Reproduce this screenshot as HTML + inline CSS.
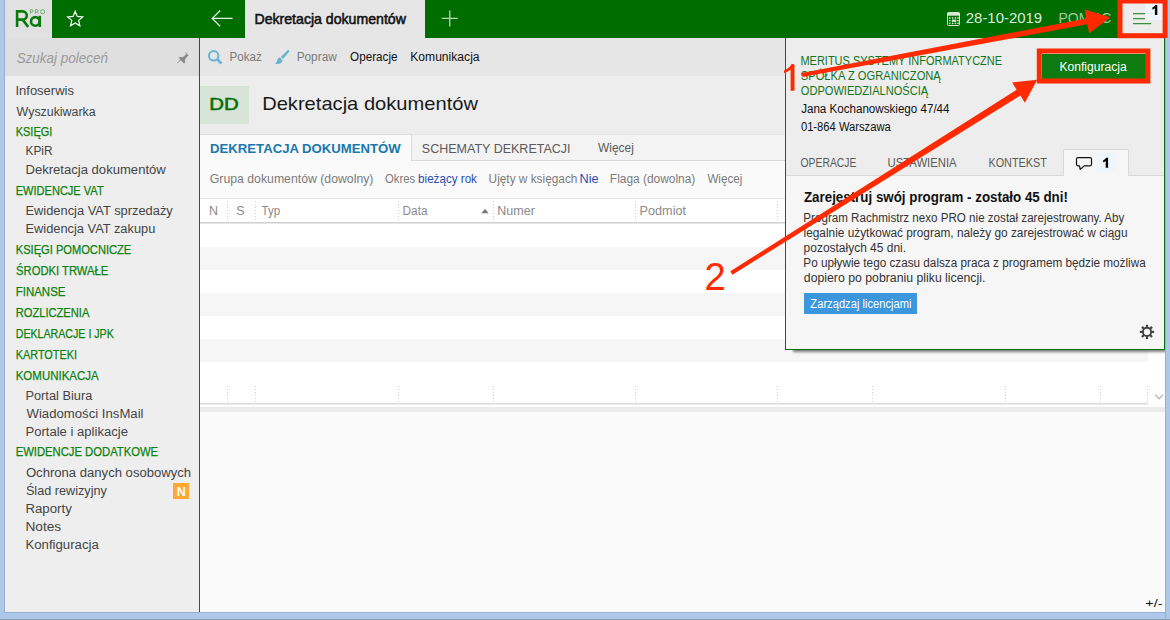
<!DOCTYPE html>
<html>
<head>
<meta charset="utf-8">
<title>Dekretacja dokumentów</title>
<style>
html,body{margin:0;padding:0;}
body{width:1170px;height:620px;overflow:hidden;position:relative;background:#adc8e8;font-family:"Liberation Sans",sans-serif;font-size:12.5px;color:#444;}
.a{position:absolute;}
.t{position:absolute;white-space:nowrap;line-height:1;transform-origin:0 0;}
svg{position:absolute;left:0;top:0;overflow:visible;}
</style>
</head>
<body>
<!-- window frame -->
<div class="a" style="left:0;top:619px;width:1170px;height:1px;background:#8b9db3;"></div>
<!-- top bar -->
<div class="a" style="left:5px;top:0;width:1160px;height:38px;background:#006d00;"></div>
<div class="a" style="left:5px;top:0;width:47px;height:38px;background:#e1e1e1;"></div>
<div class="a" style="left:245px;top:0;width:180px;height:38px;background:#e6e6e6;"></div>
<!-- sidebar -->
<div class="a" style="left:5px;top:38px;width:194px;height:574px;background:#eeeeee;"></div>
<div class="a" style="left:5px;top:38px;width:194px;height:38px;background:#dfdfdf;"></div>
<!-- main -->
<div class="a" style="left:200px;top:38px;width:965px;height:574px;background:#fafafa;"></div>
<div class="a" style="left:200px;top:38px;width:965px;height:38px;background:#e6e6e6;"></div>
<div class="a" style="left:200px;top:76px;width:965px;height:58px;background:#ededed;"></div>
<div class="a" style="left:200px;top:86px;width:49px;height:38px;background:#d8e4d8;"></div>
<!-- tab strip -->
<div class="a" style="left:200px;top:134px;width:965px;height:26px;background:#f3f3f3;border-top:1px solid #e4e4e4;box-sizing:border-box;"></div>
<div class="a" style="left:200px;top:160px;width:965px;height:1px;background:#dadada;"></div>
<div class="a" style="left:200px;top:134px;width:212px;height:27px;background:#fafafa;border-top:1px solid #dcdcdc;border-right:1px solid #dcdcdc;box-sizing:border-box;"></div>
<!-- filter row -->
<div class="a" style="left:200px;top:161px;width:965px;height:37px;background:#fafafa;"></div>
<!-- table -->
<div class="a" style="left:200px;top:198px;width:965px;height:209px;background:#ffffff;"></div>
<div class="a" style="left:200px;top:198px;width:965px;height:1px;background:#e6e6e6;"></div>
<div class="a" style="left:200px;top:222px;width:965px;height:1px;background:#cfcfcf;"></div>
<div class="a" style="left:200px;top:223px;width:965px;height:1px;background:#e6e6e6;"></div>
<div class="a" style="left:200px;top:247px;width:948px;height:23px;background:#f6f6f6;"></div>
<div class="a" style="left:200px;top:293px;width:948px;height:23px;background:#f6f6f6;"></div>
<div class="a" style="left:200px;top:339px;width:948px;height:23px;background:#f6f6f6;"></div>
<div class="a" style="left:200px;top:403px;width:948px;height:1px;background:#dcdcdc;"></div>
<div class="a" style="left:200px;top:404px;width:948px;height:1px;background:#ececec;"></div>
<div class="a" style="left:200px;top:407px;width:965px;height:5px;background:#ebebeb;"></div>
<!-- green vertical line -->
<div class="a" style="left:199px;top:38px;width:1px;height:574px;background:#0a7010;"></div>
<div class="t" style="left:15px;top:84.75px;font-size:12.5px;color:#444444;transform:translateX(0.43px) scaleX(1.0401);">Infoserwis</div>
<div class="t" style="left:16px;top:105.75px;font-size:12.5px;color:#444444;transform:translateX(0.60px) scaleX(0.9911);">Wyszukiwarka</div>
<div class="t" style="left:15px;top:125.75px;font-size:12.5px;color:#0c820c;-webkit-text-stroke:0.25px #0c820c;transform:translateX(0.72px) scaleX(0.8766);">KSIĘGI</div>
<div class="t" style="left:25px;top:144.75px;font-size:12.5px;color:#444444;transform:translateX(0.55px) scaleX(0.9461);">KPiR</div>
<div class="t" style="left:25px;top:163.75px;font-size:12.5px;color:#444444;transform:translateX(0.45px) scaleX(1.0463);">Dekretacja dokumentów</div>
<div class="t" style="left:15px;top:184.75px;font-size:12.5px;color:#0c820c;-webkit-text-stroke:0.25px #0c820c;transform:translateX(0.72px) scaleX(0.8832);">EWIDENCJE VAT</div>
<div class="t" style="left:25px;top:204.75px;font-size:12.5px;color:#444444;transform:translateX(0.47px) scaleX(1.0292);">Ewidencja VAT sprzedaży</div>
<div class="t" style="left:25px;top:222.75px;font-size:12.5px;color:#444444;transform:translateX(0.47px) scaleX(1.0268);">Ewidencja VAT zakupu</div>
<div class="t" style="left:15px;top:243.75px;font-size:12.5px;color:#0c820c;-webkit-text-stroke:0.25px #0c820c;transform:translateX(0.71px) scaleX(0.8897);">KSIĘGI POMOCNICZE</div>
<div class="t" style="left:16px;top:264.75px;font-size:12.5px;color:#0c820c;-webkit-text-stroke:0.25px #0c820c;transform:translateX(0.09px) scaleX(0.8987);">ŚRODKI TRWAŁE</div>
<div class="t" style="left:15px;top:285.75px;font-size:12.5px;color:#0c820c;-webkit-text-stroke:0.25px #0c820c;transform:translateX(0.68px) scaleX(0.9193);">FINANSE</div>
<div class="t" style="left:15px;top:306.75px;font-size:12.5px;color:#0c820c;-webkit-text-stroke:0.25px #0c820c;transform:translateX(0.71px) scaleX(0.8912);">ROZLICZENIA</div>
<div class="t" style="left:15px;top:327.75px;font-size:12.5px;color:#0c820c;-webkit-text-stroke:0.25px #0c820c;transform:translateX(0.75px) scaleX(0.8501);">DEKLARACJE I JPK</div>
<div class="t" style="left:15px;top:348.75px;font-size:12.5px;color:#0c820c;-webkit-text-stroke:0.25px #0c820c;transform:translateX(0.73px) scaleX(0.8698);">KARTOTEKI</div>
<div class="t" style="left:15px;top:369.75px;font-size:12.5px;color:#0c820c;-webkit-text-stroke:0.25px #0c820c;transform:translateX(0.68px) scaleX(0.9202);">KOMUNIKACJA</div>
<div class="t" style="left:25px;top:389.75px;font-size:12.5px;color:#444444;transform:translateX(0.48px) scaleX(1.0224);">Portal Biura</div>
<div class="t" style="left:26px;top:407.75px;font-size:12.5px;color:#444444;transform:translateX(0.50px) scaleX(1.0529);">Wiadomości InsMail</div>
<div class="t" style="left:25px;top:425.75px;font-size:12.5px;color:#444444;transform:translateX(0.45px) scaleX(1.0461);">Portale i aplikacje</div>
<div class="t" style="left:15px;top:445.75px;font-size:12.5px;color:#0c820c;-webkit-text-stroke:0.25px #0c820c;transform:translateX(0.70px) scaleX(0.9005);">EWIDENCJE DODATKOWE</div>
<div class="t" style="left:25px;top:466.75px;font-size:12.5px;color:#444444;transform:translateX(0.91px) scaleX(1.0473);">Ochrona danych osobowych</div>
<div class="t" style="left:25px;top:484.75px;font-size:12.5px;color:#444444;transform:translateX(0.93px) scaleX(1.0123);">Ślad rewizyjny</div>
<div class="t" style="left:25px;top:502.75px;font-size:12.5px;color:#444444;transform:translateX(0.44px) scaleX(1.0592);">Raporty</div>
<div class="t" style="left:25px;top:520.75px;font-size:12.5px;color:#444444;transform:translateX(0.40px) scaleX(1.0956);">Notes</div>
<div class="t" style="left:25px;top:538.75px;font-size:12.5px;color:#444444;transform:translateX(0.45px) scaleX(1.0549);">Konfiguracja</div>
<div class="t" style="left:16px;top:51.00px;font-size:14px;color:#9a9a9a;font-style:italic;transform:translateX(0.64px) scaleX(0.9619);">Szukaj poleceń</div>
<div class="t" style="left:254px;top:11.75px;font-size:14.5px;color:#111111;-webkit-text-stroke:0.55px #111111;transform:translateX(0.44px) scaleX(0.9738);">Dekretacja dokumentów</div>
<div class="t" style="left:965px;top:10.90px;font-size:14.2px;color:#dcecdc;transform:translateX(0.78px) scaleX(1.0519);">28-10-2019</div>
<div class="t" style="left:1058px;top:10.90px;font-size:14.2px;color:#a3c9a3;transform:translateX(0.39px) scaleX(0.9882);">POMOC</div>
<div class="t" style="left:229px;top:50.75px;font-size:12.5px;color:#7a7a7a;transform:translateX(0.47px) scaleX(0.9283);">Pokaż</div>
<div class="t" style="left:296px;top:50.75px;font-size:12.5px;color:#7a7a7a;transform:translateX(0.65px) scaleX(0.9464);">Popraw</div>
<div class="t" style="left:350px;top:50.75px;font-size:12.5px;color:#111111;transform:translateX(0.07px) scaleX(0.9347);">Operacje</div>
<div class="t" style="left:410px;top:50.75px;font-size:12.5px;color:#111111;transform:translateX(0.23px) scaleX(0.9687);">Komunikacja</div>
<div class="t" style="left:209px;top:96.00px;font-size:17px;color:#0a6e0a;-webkit-text-stroke:0.55px #0a6e0a;transform:translateX(0.31px) scaleX(1.1972);">DD</div>
<div class="t" style="left:262px;top:95.20px;font-size:18.6px;color:#1a1a1a;transform:translateX(0.13px) scaleX(1.0822);">Dekretacja dokumentów</div>
<div class="t" style="left:210px;top:141.80px;font-size:13.4px;color:#1878ad;font-weight:700;transform:translateX(0.04px) scaleX(0.9822);">DEKRETACJA DOKUMENTÓW</div>
<div class="t" style="left:421px;top:141.80px;font-size:13.4px;color:#5a5a5a;transform:translateX(0.87px) scaleX(0.9336);">SCHEMATY DEKRETACJI</div>
<div class="t" style="left:598px;top:141.75px;font-size:12.5px;color:#5a5a5a;transform:translateX(0.00px) scaleX(0.9545);">Więcej</div>
<div class="t" style="left:209px;top:172.75px;font-size:12.5px;color:#7a7a7a;transform:translateX(0.79px) scaleX(0.9813);">Grupa dokumentów (dowolny)</div>
<div class="t" style="left:384px;top:172.75px;font-size:12.5px;color:#7a7a7a;transform:translateX(0.99px) scaleX(0.9030);">Okres</div>
<div class="t" style="left:418px;top:172.75px;font-size:12.5px;color:#2b4db3;transform:translateX(0.10px) scaleX(0.9307);">bieżący rok</div>
<div class="t" style="left:488px;top:172.75px;font-size:12.5px;color:#7a7a7a;transform:translateX(0.61px) scaleX(0.9470);">Ujęty w księgach</div>
<div class="t" style="left:579px;top:172.75px;font-size:12.5px;color:#2b4db3;transform:translateX(0.49px) scaleX(1.0150);">Nie</div>
<div class="t" style="left:609px;top:172.75px;font-size:12.5px;color:#7a7a7a;transform:translateX(0.85px) scaleX(0.9533);">Flaga (dowolna)</div>
<div class="t" style="left:707px;top:172.75px;font-size:12.5px;color:#7a7a7a;transform:translateX(0.40px) scaleX(0.9300);">Więcej</div>
<div class="t" style="left:209px;top:204.75px;font-size:12.5px;color:#8a8a8a;transform:translateX(0.07px) scaleX(1.0000);">N</div>
<div class="t" style="left:236px;top:204.75px;font-size:12.5px;color:#8a8a8a;transform:translateX(0.21px) scaleX(1.0000);">S</div>
<div class="t" style="left:261px;top:204.75px;font-size:12.5px;color:#8a8a8a;transform:translateX(0.47px) scaleX(0.9235);">Typ</div>
<div class="t" style="left:402px;top:204.75px;font-size:12.5px;color:#8a8a8a;transform:translateX(0.55px) scaleX(0.9469);">Data</div>
<div class="t" style="left:497px;top:204.75px;font-size:12.5px;color:#8a8a8a;transform:translateX(0.30px) scaleX(1.0016);">Numer</div>
<div class="t" style="left:639px;top:204.75px;font-size:12.5px;color:#8a8a8a;transform:translateX(0.59px) scaleX(1.0129);">Podmiot</div>
<div class="t" style="left:1145px;top:598.25px;font-size:11.5px;color:#111111;transform:translateX(0.37px) scaleX(1.2592);">+/-</div>
<!-- N badge -->
<div class="a" style="left:173px;top:483px;width:16px;height:16px;background:#ffa834;"></div>
<svg width="1170" height="620" viewBox="0 0 1170 620">
<g fill="none" stroke="#0a7a0a" stroke-width="2.6"><path d="M17.1 26.9V11.4h5.6a4.1 4.1 0 0 1 0 8.2H17.1M22.6 19.6l5.6 7.3"/><circle cx="35.3" cy="21.4" r="4.3"/><path d="M39.8 15.8v11.1"/></g>
<g fill="none" stroke="#6fb06f" stroke-width="0.95"><path d="M30.4 13.8V9.65h1.5a1.25 1.25 0 0 1 0 2.5h-1.5"/><path d="M35.4 13.8V9.65h1.5a1.2 1.2 0 0 1 0 2.4h-1.5M36.9 12.05l1.5 1.75"/><ellipse cx="42.6" cy="11.7" rx="2.15" ry="2.1"/></g>
<polygon points="75.20,11.40 77.32,16.39 82.71,16.86 78.62,20.41 79.84,25.69 75.20,22.90 70.56,25.69 71.78,20.41 67.69,16.86 73.08,16.39" fill="none" stroke="#ffffff" stroke-width="1.2" stroke-linejoin="miter"/>
<path d="M212.3 18.4H232.6M220.2 10.5l-7.9 7.9 7.9 7.9" fill="none" stroke="#e2eee2" stroke-width="1.3"/>
<path d="M441.8 18.4h16M449.8 10.4v16" fill="none" stroke="#b5d5b5" stroke-width="1.3"/>
<g fill="#8a8a8a" stroke="none"><path d="M185.2 51.9l3.6 3.8-1.3 0.6-2.6 3.3 0.3 3-1.2 0.9-5.2-5.4 1-1.2 3 0.3 3.2-2.7z"/><path d="M181.6 59.4l-3.9 3.9-0.5-0.5 3.9-3.9z"/></g>
<g fill="none" stroke="#6ab4d3"><circle cx="213.7" cy="55.8" r="4.8" stroke-width="2"/><path d="M217.3 59.4l4.1 4.1" stroke-width="2.6" stroke-linecap="butt"/></g>
<g fill="#6ab4d3"><path d="M288.9 50.2c0.6 0.6 0.3 1.4-0.3 2.2l-5.6 6.6-2.2-2.1 6.3-6.2c0.7-0.7 1.3-1 1.8-0.5z"/><path d="M279.9 57.6l2.3 2.2c0.6 1.6-0.4 3-2.2 3.6-1.6 0.6-3.6 0.7-4.9 0.4 1.2-0.8 1.7-1.8 2-3.2 0.3-1.6 1.2-2.8 2.8-3z"/></g>
<g fill="#d7e7d7"><rect x="947.5" y="12.5" width="12" height="13" rx="1" fill="none" stroke="#d7e7d7" stroke-width="1"/><rect x="947.5" y="12.5" width="12" height="3.2"/><rect x="949.0" y="17.2" width="1.5" height="1.5"/><rect x="949.0" y="19.9" width="1.5" height="1.5"/><rect x="949.0" y="22.6" width="1.5" height="1.5"/><rect x="951.9" y="17.2" width="1.5" height="1.5"/><rect x="951.9" y="19.9" width="1.5" height="1.5"/><rect x="951.9" y="22.6" width="1.5" height="1.5"/><rect x="954.7" y="17.2" width="1.5" height="1.5"/><rect x="954.7" y="19.9" width="1.5" height="1.5"/><rect x="954.7" y="22.6" width="1.5" height="1.5"/><rect x="957.3" y="17.2" width="1.5" height="1.5"/><rect x="957.3" y="19.9" width="1.5" height="1.5"/><rect x="957.3" y="22.6" width="1.5" height="1.5"/><rect x="951.9" y="19.6" width="4.3" height="2.2"/></g>
<path d="M481.3 213.2l3.7-4.4 3.7 4.4z" fill="#7a7a7a"/>
<line x1="227.5" y1="201" x2="227.5" y2="222" stroke="#cfcfcf" stroke-width="1" stroke-dasharray="1 2"/>
<line x1="255.5" y1="201" x2="255.5" y2="222" stroke="#cfcfcf" stroke-width="1" stroke-dasharray="1 2"/>
<line x1="398.5" y1="201" x2="398.5" y2="222" stroke="#cfcfcf" stroke-width="1" stroke-dasharray="1 2"/>
<line x1="493.5" y1="201" x2="493.5" y2="222" stroke="#cfcfcf" stroke-width="1" stroke-dasharray="1 2"/>
<line x1="635.5" y1="201" x2="635.5" y2="222" stroke="#cfcfcf" stroke-width="1" stroke-dasharray="1 2"/>
<line x1="777.5" y1="201" x2="777.5" y2="222" stroke="#cfcfcf" stroke-width="1" stroke-dasharray="1 2"/>
<line x1="227.5" y1="386" x2="227.5" y2="404" stroke="#cfcfcf" stroke-width="1" stroke-dasharray="1 2"/>
<line x1="255.5" y1="386" x2="255.5" y2="404" stroke="#cfcfcf" stroke-width="1" stroke-dasharray="1 2"/>
<line x1="398.5" y1="386" x2="398.5" y2="404" stroke="#cfcfcf" stroke-width="1" stroke-dasharray="1 2"/>
<line x1="493.5" y1="386" x2="493.5" y2="404" stroke="#cfcfcf" stroke-width="1" stroke-dasharray="1 2"/>
<line x1="635.5" y1="386" x2="635.5" y2="404" stroke="#cfcfcf" stroke-width="1" stroke-dasharray="1 2"/>
<line x1="777.5" y1="386" x2="777.5" y2="404" stroke="#cfcfcf" stroke-width="1" stroke-dasharray="1 2"/>
<line x1="872.5" y1="386" x2="872.5" y2="404" stroke="#cfcfcf" stroke-width="1" stroke-dasharray="1 2"/>
<line x1="1005.5" y1="386" x2="1005.5" y2="404" stroke="#cfcfcf" stroke-width="1" stroke-dasharray="1 2"/>
<line x1="1100.5" y1="386" x2="1100.5" y2="404" stroke="#cfcfcf" stroke-width="1" stroke-dasharray="1 2"/>
<line x1="1147.5" y1="386" x2="1147.5" y2="404" stroke="#cfcfcf" stroke-width="1" stroke-dasharray="1 2"/>
<path d="M1155.2 394.8l3.9 3.9 3.9-3.9" fill="none" stroke="#bdbdbd" stroke-width="1.6"/>
</svg>
<!-- popup panel -->
<div class="a" style="left:785px;top:38px;width:380px;height:312px;background:#ededed;box-shadow:8px 2px 2.5px rgba(0,0,0,0.5);"></div>
<div class="a" style="left:786px;top:176px;width:378px;height:173px;background:#f6f6f6;"></div>
<div class="a" style="left:786px;top:175px;width:378px;height:1px;background:#d9d9d9;"></div>
<div class="a" style="left:1063px;top:149px;width:66px;height:27px;background:#f6f6f6;border:1px solid #d9d9d9;border-bottom:none;box-sizing:border-box;"></div>
<div class="a" style="left:1096px;top:153px;width:20px;height:20px;background:#eef6fb;"></div>
<div class="a" style="left:785px;top:38px;width:380px;height:312px;border:1px solid #0a7010;border-top:none;box-sizing:border-box;"></div>
<div class="a" style="left:1042px;top:54px;width:104px;height:25px;background:#0f7a0f;"></div>
<div class="a" style="left:804px;top:293px;width:113px;height:21px;background:#3a96dd;"></div>
<!-- menu button -->
<div class="a" style="left:1120px;top:0;width:45px;height:36px;background:#ececec;"></div>
<div class="a" style="left:1145px;top:3px;width:18px;height:17px;background:#eef6fb;"></div>
<div class="t" style="left:800px;top:54.75px;font-size:12.5px;color:#14741a;transform:translateX(0.42px) scaleX(0.8789);">MERITUS SYSTEMY INFORMATYCZNE</div>
<div class="t" style="left:800px;top:69.75px;font-size:12.5px;color:#14741a;transform:translateX(0.80px) scaleX(0.8918);">SPÓŁKA Z OGRANICZONĄ</div>
<div class="t" style="left:800px;top:84.75px;font-size:12.5px;color:#14741a;transform:translateX(0.80px) scaleX(0.8855);">ODPOWIEDZIALNOŚCIĄ</div>
<div class="t" style="left:801px;top:102.75px;font-size:12.5px;color:#111111;transform:translateX(0.13px) scaleX(0.9283);">Jana Kochanowskiego 47/44</div>
<div class="t" style="left:800px;top:120.75px;font-size:12.5px;color:#111111;transform:translateX(0.91px) scaleX(0.8960);">01-864 Warszawa</div>
<div class="t" style="left:1059px;top:60.75px;font-size:12.5px;color:#ffffff;transform:translateX(0.43px) scaleX(0.9688);">Konfiguracja</div>
<div class="t" style="left:800px;top:156.75px;font-size:12.5px;color:#5a5a5a;transform:translateX(0.53px) scaleX(0.8297);">OPERACJE</div>
<div class="t" style="left:887px;top:156.75px;font-size:12.5px;color:#5a5a5a;transform:translateX(0.45px) scaleX(0.9061);">USTAWIENIA</div>
<div class="t" style="left:988px;top:156.75px;font-size:12.5px;color:#5a5a5a;transform:translateX(0.43px) scaleX(0.8682);">KONTEKST</div>
<div class="t" style="left:803px;top:190.00px;font-size:14px;color:#111111;font-weight:700;transform:translateX(0.94px) scaleX(0.9532);">Zarejestruj swój program - zostało 45 dni!</div>
<div class="t" style="left:803px;top:211.75px;font-size:12.5px;color:#333333;transform:translateX(0.37px) scaleX(0.9284);">Program Rachmistrz nexo PRO nie został zarejestrowany. Aby</div>
<div class="t" style="left:803px;top:226.75px;font-size:12.5px;color:#333333;transform:translateX(0.53px) scaleX(0.9477);">legalnie użytkować program, należy go zarejestrować w ciągu</div>
<div class="t" style="left:803px;top:241.75px;font-size:12.5px;color:#333333;transform:translateX(0.58px) scaleX(0.9575);">pozostałych 45 dni.</div>
<div class="t" style="left:803px;top:256.75px;font-size:12.5px;color:#333333;transform:translateX(0.36px) scaleX(0.9384);">Po upływie tego czasu dalsza praca z programem będzie możliwa</div>
<div class="t" style="left:803px;top:271.75px;font-size:12.5px;color:#333333;transform:translateX(0.81px) scaleX(0.9823);">dopiero po pobraniu pliku licencji.</div>
<div class="t" style="left:810px;top:297.75px;font-size:12.5px;color:#ffffff;transform:translateX(0.37px) scaleX(0.8927);">Zarządzaj licencjami</div>
<svg width="1170" height="620" viewBox="0 0 1170 620">
<path d="M1133 13.6h12M1133 18.6h12M1133 23.6h18.2" stroke="#3d8f3d" stroke-width="1.3" fill="none"/>
<path d="M1078 157.6h12a1.5 1.5 0 0 1 1.5 1.5v5.2a1.5 1.5 0 0 1 -1.5 1.5h-5.6l-4.2 3.6-0.7-3.6h-1.5a1.5 1.5 0 0 1 -1.5 -1.5v-5.2a1.5 1.5 0 0 1 1.5 -1.5z" fill="none" stroke="#111" stroke-width="1.2" stroke-linejoin="round"/>
<line x1="1151.20" y1="331.90" x2="1154.10" y2="331.90" stroke="#444" stroke-width="2.2"/><line x1="1149.97" y1="334.87" x2="1152.02" y2="336.92" stroke="#444" stroke-width="2.2"/><line x1="1147.00" y1="336.10" x2="1147.00" y2="339.00" stroke="#444" stroke-width="2.2"/><line x1="1144.03" y1="334.87" x2="1141.98" y2="336.92" stroke="#444" stroke-width="2.2"/><line x1="1142.80" y1="331.90" x2="1139.90" y2="331.90" stroke="#444" stroke-width="2.2"/><line x1="1144.03" y1="328.93" x2="1141.98" y2="326.88" stroke="#444" stroke-width="2.2"/><line x1="1147.00" y1="327.70" x2="1147.00" y2="324.80" stroke="#444" stroke-width="2.2"/><line x1="1149.97" y1="328.93" x2="1152.02" y2="326.88" stroke="#444" stroke-width="2.2"/><circle cx="1147" cy="331.9" r="4.1" fill="none" stroke="#444" stroke-width="1.9"/>
<path d="M1157.3 5V14.9h-2.4V8.20c-0.6 0.6-1.4 1.1-2.5 1.4V7.40c1.2-0.5 2.3-1.3 2.9-2.4z" fill="#000"/>
<path d="M1108.1 157.8V167.8h-2.4V161.00c-0.6 0.6-1.4 1.1-2.5 1.4V160.20c1.2-0.5 2.3-1.3 2.9-2.4z" fill="#000"/>
</svg>
<svg width="1170" height="620" viewBox="0 0 1170 620">
<rect x="1120" y="1" width="45.1" height="34.7" fill="none" stroke="#ff2a00" stroke-width="5"/>
<rect x="1039.3" y="51" width="108.6" height="30" fill="none" stroke="#ff2a00" stroke-width="5"/>
<path d="M803.59 76.76 L1087.39 24.30 L1089.11 33.49 L1110.40 17.30 L1084.59 9.41 L1086.31 18.60 L802.81 72.64Z" fill="#ff2a00"/>
<circle cx="803.4" cy="74.7" r="2.1" fill="#ff2a00"/>
<path d="M732.46 274.69 L1020.36 95.61 L1024.91 102.85 L1037.20 79.80 L1012.09 82.45 L1016.64 89.69 L730.34 271.31Z" fill="#ff2a00"/>
<path d="M794.5 64.4V90.8h-3.9V69.4c-1.6 1.5-4 2.9-6.6 3.7v-2.6c3.2-1.1 6.4-3.7 7.7-6.7z" fill="#ff2a00"/>
</svg>
<div class="t" style="left:704px;top:258.35px;font-size:38.3px;color:#ff2a00;transform:translateX(0.48px) scaleX(1.0000);">2</div>
<div class="t" style="left:176px;top:485.75px;font-size:12.5px;color:#ffffff;font-weight:700;transform:translateX(0.70px) scaleX(1.0000);">N</div>
<!-- frame edges -->
<div class="a" style="left:4px;top:0;width:1px;height:613px;background:#97b1d3;"></div>
<div class="a" style="left:4px;top:612px;width:1162px;height:1px;background:#97b1d3;"></div>
<!-- right frame over everything -->
<div class="a" style="left:1165px;top:38px;width:5px;height:581px;background:#adc8e8;border-left:1px solid #97b1d3;box-sizing:border-box;"></div>
</body>
</html>
